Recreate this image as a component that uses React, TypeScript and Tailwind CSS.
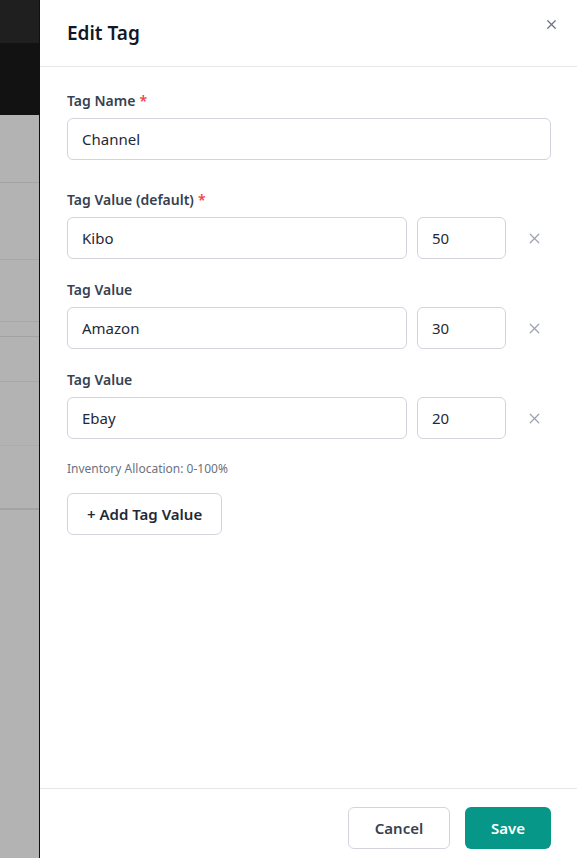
import { X } from 'lucide-react'

interface TagValue {
  name: string
  amount: string
  isDefault?: boolean
}

const TAG_VALUES: TagValue[] = [
  { name: 'Kibo', amount: '50', isDefault: true },
  { name: 'Amazon', amount: '30' },
  { name: 'Ebay', amount: '20' },
]

const inputClass =
  'h-[42px] rounded-md border border-[#d1d5db] bg-white px-[14px] text-[15px] text-[#1f2937] outline-none'

function Backdrop() {
  // dimmed page behind the drawer
  return (
    <div className="flex w-[40px] shrink-0 flex-col border-r border-[#111]">
      <div className="h-[43px] bg-[#1f1f1f]" />
      <div className="h-[72px] bg-[#121212]" />
      <div className="h-[68px] border-b border-[#a3a3a3] bg-[#b3b3b3]" />
      <div className="h-[77px] border-b border-[#a8a8a8] bg-[#b3b3b3]" />
      <div className="h-[62px] border-b border-[#a8a8a8] bg-[#b3b3b3]" />
      <div className="h-[15px] border-b border-[#a3a3a3] bg-[#b3b3b3]" />
      <div className="h-[45px] border-b border-[#a8a8a8] bg-[#b3b3b3]" />
      <div className="h-[64px] border-b border-[#acacac] bg-[#b3b3b3]" />
      <div className="h-[64px] border-b-2 border-[#a3a3a3] bg-[#b3b3b3]" />
      <div className="flex-1 bg-[#b3b3b3]" />
    </div>
  )
}

function Label({ text, required }: { text: string; required?: boolean }) {
  return (
    <label className="mb-[7px] block text-[14px] font-semibold leading-[20px] text-[#374151]">
      {text}
      {required && <span className="ml-1 text-[#ef4444]">*</span>}
    </label>
  )
}

export default function App() {
  return (
    <div
      className="flex h-[858px] w-[577px] overflow-hidden bg-white"
      style={{ fontFamily: '"Noto Sans", "Open Sans", sans-serif' }}
    >
      <Backdrop />

      <div className="flex min-w-0 flex-1 flex-col bg-white">
        {/* Header */}
        <div className="relative flex h-[67px] shrink-0 items-center border-b border-[#e5e7eb] pl-[27px]">
          <h2 className="text-[19px] font-semibold text-[#111827]">Edit Tag</h2>
          <button className="absolute right-[16px] top-[15px] p-0.5 text-[#6b7280]" aria-label="Close">
            <X className="h-[15px] w-[15px]" strokeWidth={2} />
          </button>
        </div>

        {/* Body */}
        <div className="flex-1 pl-[27px] pr-[26px] pt-[24px]">
          <Label text="Tag Name" required />
          <input readOnly value="Channel" className={`${inputClass} w-full`} />

          <div className="mt-[30px] flex flex-col gap-[21px]">
            {TAG_VALUES.map((v, i) => (
              <div key={i}>
                <Label text={v.isDefault ? 'Tag Value (default)' : 'Tag Value'} required={v.isDefault} />
                <div className="flex items-center">
                  <input readOnly value={v.name} className={`${inputClass} w-[340px]`} />
                  <input readOnly value={v.amount} className={`${inputClass} ml-[10px] w-[89px]`} />
                  <button className="ml-[20px] text-[#9ca3af]" aria-label="Remove value">
                    <X className="h-[17px] w-[17px]" strokeWidth={1.75} />
                  </button>
                </div>
              </div>
            ))}
          </div>

          <p className="mt-[21px] text-[12px] text-[#6b7280]">Inventory Allocation: 0-100%</p>

          <button className="mt-[15px] h-[42px] rounded-md border border-[#d1d5db] bg-white px-[19px] text-[15px] font-semibold text-[#1f2937]">
            + Add Tag Value
          </button>
        </div>

        {/* Footer */}
        <div className="flex shrink-0 justify-end gap-[15px] border-t border-[#e5e7eb] pb-[9px] pr-[26px] pt-[18px]">
          <button className="h-[42px] w-[102px] rounded-md border border-[#d1d5db] bg-white text-[15px] font-semibold text-[#374151]">
            Cancel
          </button>
          <button className="h-[42px] w-[86px] rounded-md bg-[#079788] text-[15px] font-semibold text-white">
            Save
          </button>
        </div>
      </div>
    </div>
  )
}
